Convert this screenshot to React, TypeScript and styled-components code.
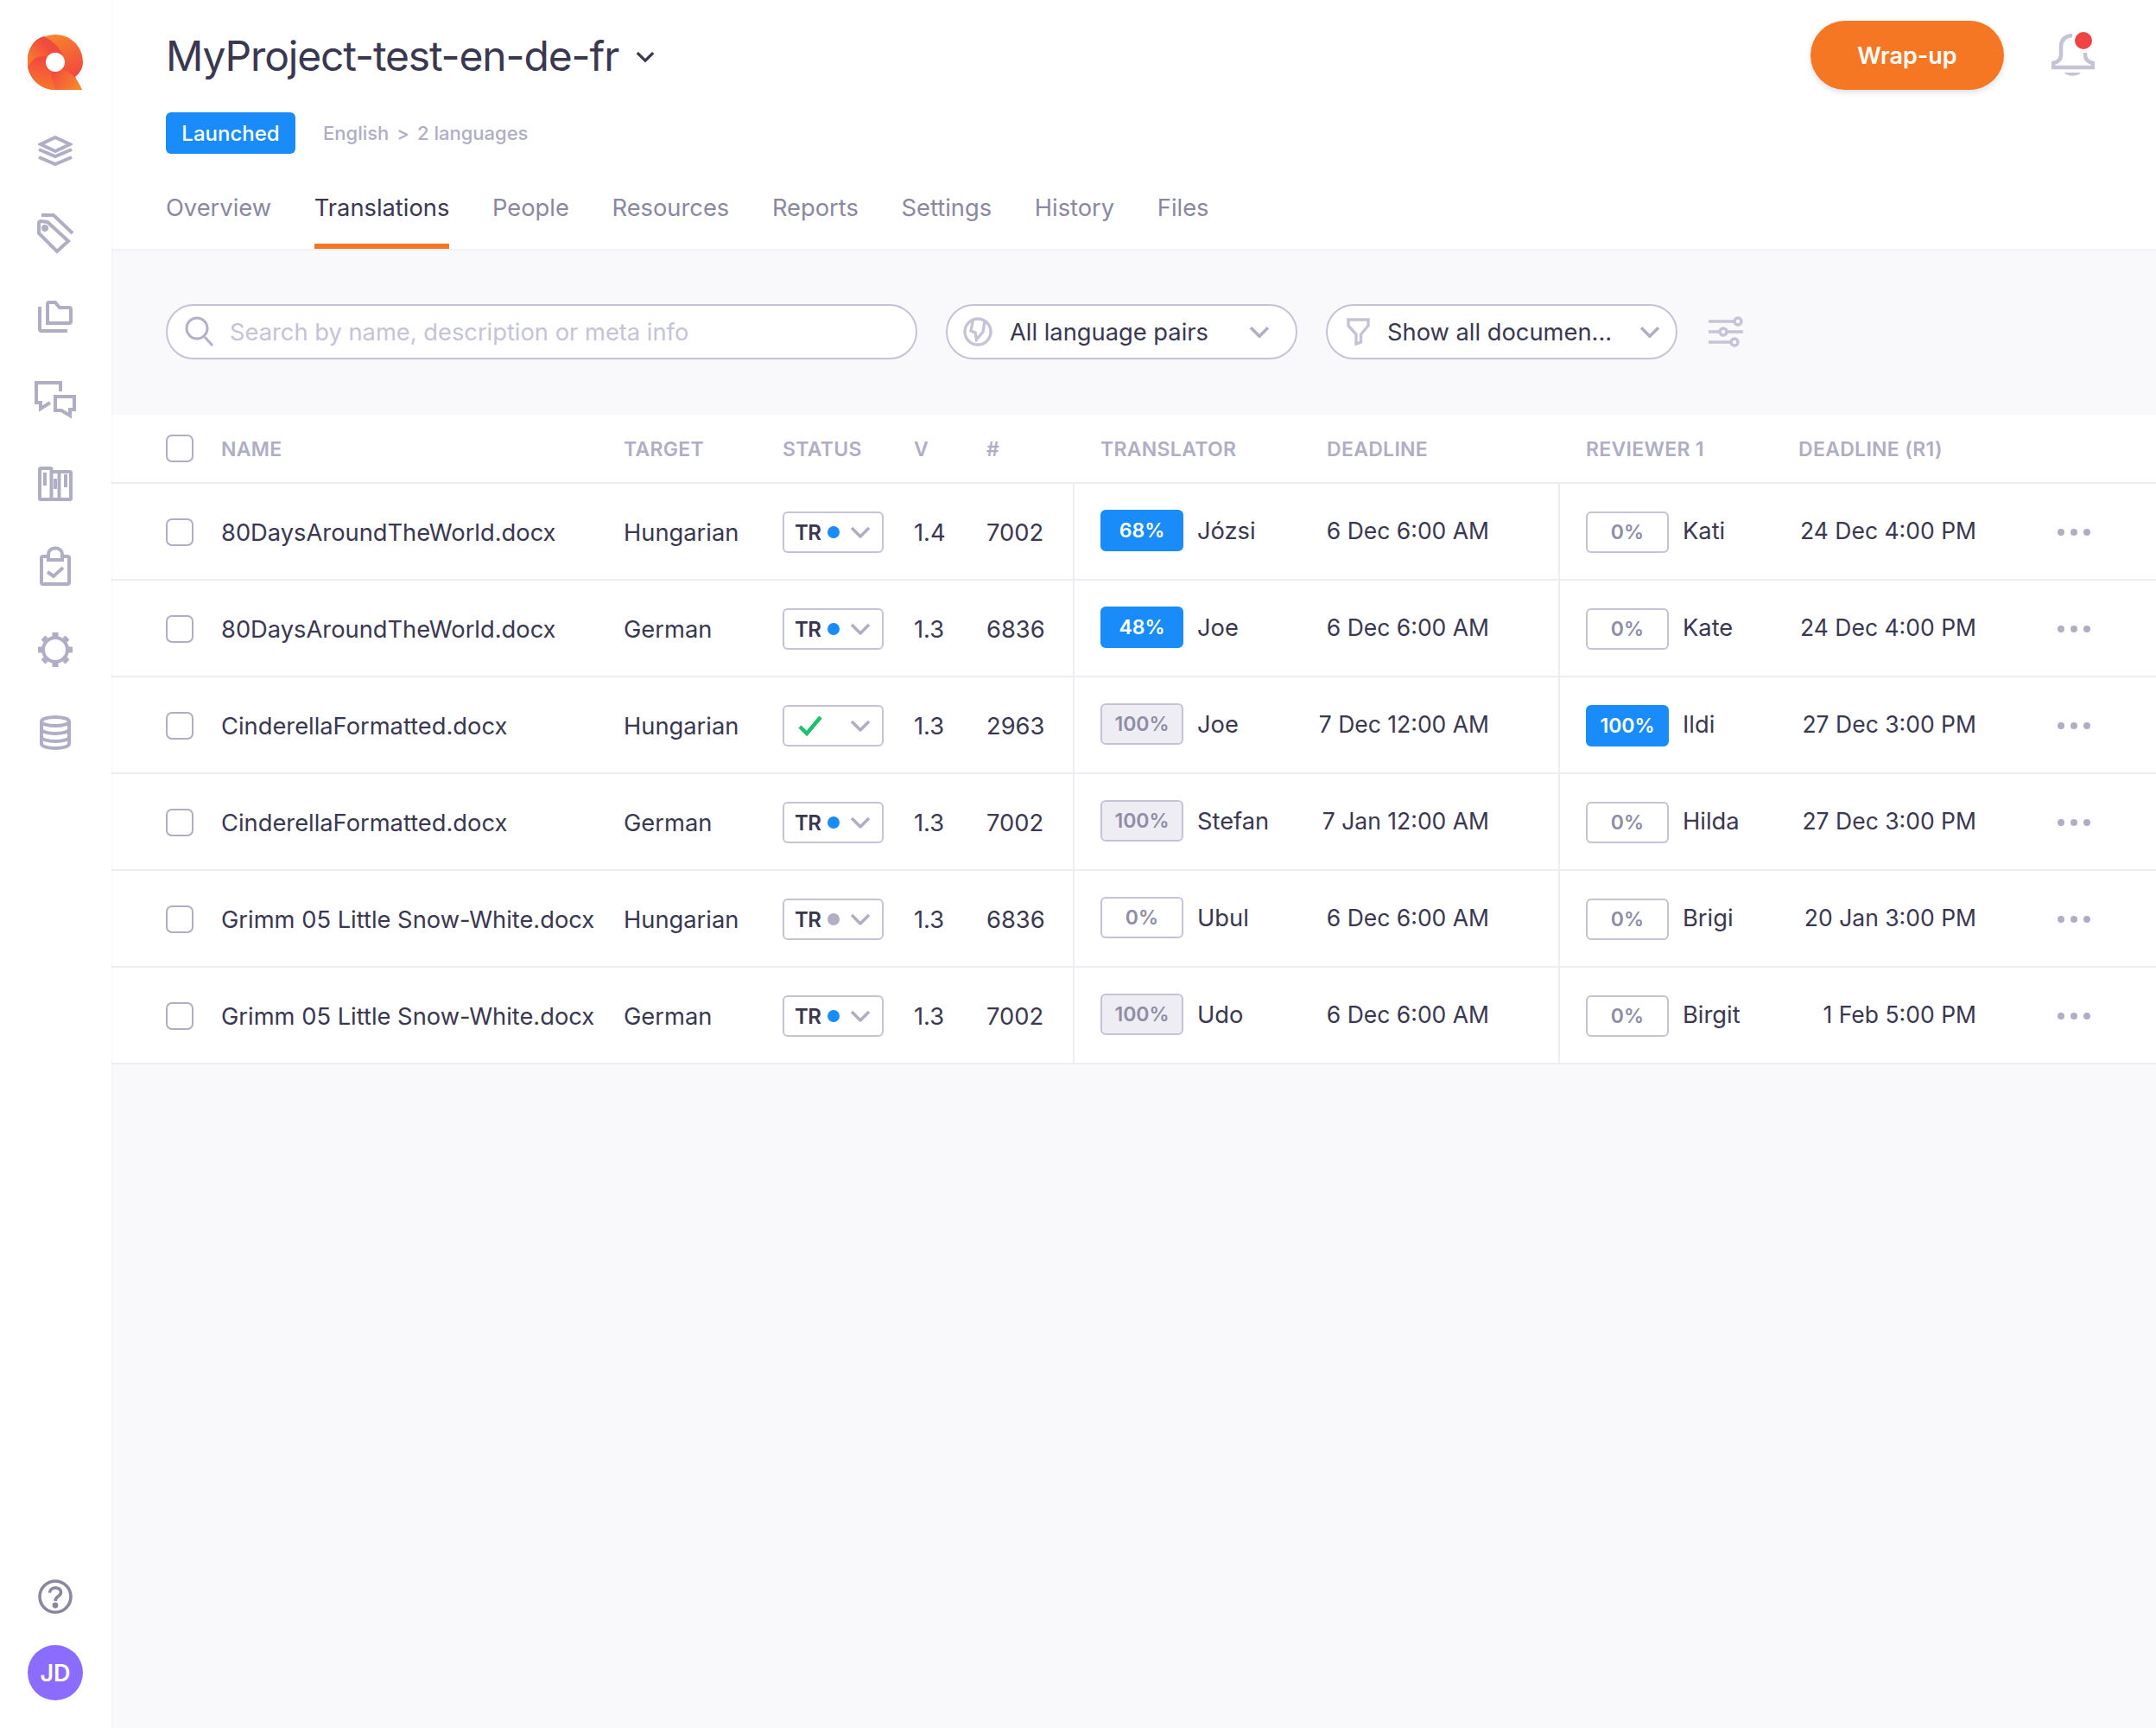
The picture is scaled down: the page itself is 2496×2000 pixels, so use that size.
import React from 'react'
import styled, { createGlobalStyle } from 'styled-components'

const GlobalStyle = createGlobalStyle`
  html, body {
    margin: 0;
    padding: 0;
    background: #f9f9fc;
    font-family: Inter, "Liberation Sans", sans-serif;
    color: #3a3750;
  }
  * { box-sizing: border-box; }
`

const Page = styled.div`
  display: flex;
  width: 2496px;
  min-height: 2000px;
`

/* Sidebar */
const Sidebar = styled.aside`
  width: 129px;
  flex: none;
  display: flex;
  flex-direction: column;
  align-items: center;
  background: #fff;
  box-shadow: 1px 0 3px rgba(60, 55, 100, 0.04);
  padding: 40px 1px 32px 0;
  z-index: 1;
`

const Nav = styled.nav`
  display: flex;
  flex-direction: column;
  align-items: center;
  margin-top: 23px;
  flex: 1;
`

const NavItem = styled.div`
  width: 64px;
  height: 96.15px;
  display: flex;
  align-items: center;
  justify-content: center;
`

const AvatarCircle = styled.div`
  width: 64px;
  height: 64px;
  margin-top: 36px;
  border-radius: 50%;
  background: #8a6dff;
  color: #fff;
  font-size: 27px;
  font-weight: 600;
  display: flex;
  align-items: center;
  justify-content: center;
`

/* Header */
const Main = styled.main`
  flex: 1;
  min-width: 0;
`

const Header = styled.header`
  height: 290px;
  background: #fff;
  border-bottom: 2px solid #f0f0f5;
  padding: 0 0 0 63px;
  display: flex;
  flex-direction: column;
`

const TitleRow = styled.div`
  height: 130px;
  display: flex;
  align-items: center;
  padding-bottom: 2px;
`

const Title = styled.h1`
  margin: 0;
  font-size: 48px;
  font-weight: 400;
  letter-spacing: -1.15px;
  color: #3a3750;
`

const TitleCaret = styled.span`
  display: flex;
  margin-left: 20px;
  margin-top: 4px;
`

const HeaderActions = styled.div`
  margin-left: auto;
  margin-right: 71px;
  display: flex;
  align-items: center;
  gap: 55px;
`

const WrapButton = styled.button`
  width: 224px;
  height: 80px;
  border: 0;
  border-radius: 40px;
  background: #f57723;
  color: #fff;
  font-family: inherit;
  font-size: 27px;
  font-weight: 600;
  box-shadow: 0 3px 6px rgba(60, 55, 100, 0.16);
`

const Bell = styled.div`
  position: relative;
  width: 50px;
  height: 50px;
`

const BellDot = styled.span`
  position: absolute;
  right: 3px;
  top: -2px;
  width: 20px;
  height: 20px;
  border-radius: 50%;
  background: #f04343;
`

const MetaRow = styled.div`
  display: flex;
  align-items: center;
  height: 48px;
  gap: 32px;
`

const StateChip = styled.span`
  width: 150px;
  height: 48px;
  border-radius: 6px;
  background: #1a8cf9;
  color: #fff;
  font-size: 24px;
  font-weight: 500;
  display: flex;
  align-items: center;
  justify-content: center;
`

const LangInfo = styled.span`
  display: flex;
  align-items: center;
  gap: 9px;
  font-size: 22px;
  font-weight: 500;
  color: #b0aec4;
`

const Tabs = styled.div`
  display: flex;
  gap: 49.7px;
  margin-top: auto;
  height: 84px;
`

const Tab = styled.div<{ $active?: boolean }>`
  height: 84px;
  display: flex;
  align-items: center;
  padding-bottom: 6px;
  font-size: 27.3px;
  color: ${(p) => (p.$active ? '#3a3750' : '#8a88a0')};
  border-bottom: 6px solid ${(p) => (p.$active ? '#f57723' : 'transparent')};
`

/* Toolbar */
const Toolbar = styled.div`
  height: 190px;
  padding: 62px 0 0 63px;
  display: flex;
  align-items: flex-start;
  gap: 33px;
`

const Pill = styled.div<{ $width: number; $left: number; $right: number }>`
  width: ${(p) => p.$width}px;
  height: 64px;
  border: 2px solid #c5c3d6;
  border-radius: 32px;
  background: #fff;
  display: flex;
  align-items: center;
  flex: none;
  padding: 0 ${(p) => p.$right}px 0 ${(p) => p.$left}px;
  font-size: 27.3px;
  color: #3a3750;
`

const Placeholder = styled.span`
  color: #c5c3d6;
  margin-left: 18px;
`

const PillLabel = styled.span`
  margin-left: 20px;
  flex: 1;
  white-space: nowrap;
`

const SlidersBox = styled.div`
  display: flex;
  height: 64px;
  align-items: center;
  margin-left: 3px;
`

/* Table */
const Table = styled.div`
  background: #fff;
`

const GRID = '64px 466px 184px 152px 84px 100px 294px 268px 278px 300px 114px'

const HeadRow = styled.div`
  display: grid;
  grid-template-columns: ${GRID};
  height: 80px;
  padding-left: 63px;
  align-items: center;
  border-bottom: 2px solid #eeedf3;
  font-size: 23px;
  font-weight: 600;
  color: #b0aec4;
`

const HeadCell = styled.div<{ $pad?: number }>`
  padding-left: ${(p) => p.$pad || 0}px;
  padding-top: 2px;
  white-space: nowrap;
  letter-spacing: 0.3px;
`

const Row = styled.div`
  display: grid;
  grid-template-columns: ${GRID};
  height: 112px;
  padding-left: 63px;
  border-bottom: 2px solid #eeedf3;
  font-size: 27.3px;
  color: #3a3750;
`

const Cell = styled.div`
  display: flex;
  align-items: center;
  white-space: nowrap;
  min-width: 0;
  padding-top: 2px;
`

const PersonCell = styled(Cell)`
  border-left: 2px solid #eeedf3;
  padding: 0 0 2px 30px;
  gap: 16px;
`

const DateCell = styled(Cell)<{ $pad: number }>`
  justify-content: flex-end;
  padding: 0 ${(p) => p.$pad}px 2px 0;
  font-size: 26.5px;
`

const Checkbox = styled.span`
  display: block;
  width: 32px;
  height: 32px;
  border: 2px solid #b0aec4;
  border-radius: 7px;
  background: #fff;
`

const StatusBox = styled.div`
  width: 117px;
  height: 48px;
  border: 2px solid #c5c3d6;
  border-radius: 6px;
  display: flex;
  align-items: center;
  padding: 0 13px;
  position: relative;
`

const StatusText = styled.span`
  font-size: 24px;
  font-weight: 600;
  letter-spacing: -0.5px;
  width: 37px;
  margin-left: -1px;
`

const Dot = styled.span<{ $grey?: boolean }>`
  width: 14px;
  height: 14px;
  border-radius: 50%;
  background: ${(p) => (p.$grey ? '#b0aec4' : '#1a8cf9')};
  margin-left: 1px;
`

const StatusCaret = styled.span`
  position: absolute;
  right: 13px;
  top: 50%;
  transform: translateY(-50%);
  display: flex;
`

const CheckWrap = styled.span`
  display: flex;
  margin-left: 3px;
`

const Progress = styled.span<{ $kind: 'blue' | 'done' | 'none'; $low?: boolean }>`
  width: 96px;
  height: 48px;
  flex: none;
  margin-top: ${(p) => (p.$low ? 4 : 0)}px;
  border-radius: 6px;
  display: flex;
  align-items: center;
  justify-content: center;
  font-size: 23px;
  font-weight: 600;
  border: 2px solid ${(p) => (p.$kind === 'blue' ? '#1a8cf9' : '#c5c3d6')};
  background: ${(p) =>
    p.$kind === 'blue' ? '#1a8cf9' : p.$kind === 'done' ? '#eeedf4' : '#fff'};
  color: ${(p) => (p.$kind === 'blue' ? '#fff' : '#8f8da6')};
`

const Dots = styled.div`
  display: flex;
  gap: 7px;
`

const MoreDot = styled.span`
  width: 8px;
  height: 8px;
  border-radius: 50%;
  background: #b0aec4;
`

/* Icons */
const ICON = '#b0aec4'

const Logo = () => (
  <svg width="64" height="64" viewBox="0 0 64 64">
    <defs>
      <linearGradient id="lgBase" x1="0.3" y1="0" x2="0.7" y2="0.8">
        <stop offset="0" stopColor="#f98a2a" />
        <stop offset="1" stopColor="#f14a3e" />
      </linearGradient>
      <linearGradient id="lgTop" x1="0" y1="0.8" x2="0.8" y2="0.1">
        <stop offset="0" stopColor="#f98029" />
        <stop offset="0.7" stopColor="#f14a3e" />
      </linearGradient>
      <linearGradient id="lgLow" x1="0.4" y1="0" x2="0.2" y2="1">
        <stop offset="0" stopColor="#f1463f" />
        <stop offset="1" stopColor="#f87a2c" />
      </linearGradient>
      <linearGradient id="lgTail" x1="0" y1="0.4" x2="1" y2="0.8">
        <stop offset="0" stopColor="#f2503c" />
        <stop offset="1" stopColor="#f98a2a" />
      </linearGradient>
    </defs>
    <path
      d="M32 0C50 0 64 14 64 32C64 39 60 45 55 49C58 55 60 59 63 64H32C14 64 0 50 0 32C0 14 14 0 32 0Z"
      fill="url(#lgBase)"
    />
    <path d="M0 38C-3 18 8 4 19 2C30 8 40 16 42 30L24 32C14 26 6 30 0 38Z" fill="url(#lgTop)" />
    <path d="M0 38C5 28 14 22 26 27L32 42L40 64H32C16 64 3 52 0 38Z" fill="url(#lgLow)" />
    <path d="M28 42C42 38 55 44 63 64H32C31 55 26 49 28 42Z" fill="url(#lgTail)" />
    <circle cx="32" cy="32" r="11" fill="#fff" />
  </svg>
)

const stroke = {
  fill: 'none',
  stroke: ICON,
  strokeWidth: 4,
}

const navIcons = [
  <svg key="layers" width="40" height="36" viewBox="0 0 40 36" {...stroke}>
    <path d="M20 2L37 10L20 18L3 10Z" />
    <path d="M1 16L20 24L39 16" />
    <path d="M1 25L20 33L39 25" />
  </svg>,
  <svg key="tag" width="44" height="48" viewBox="0 0 44 48" {...stroke}>
    <path d="M3 11C3 10 4 9 5 9L13 10L37 32L24 44L3 23Z" />
    <path d="M6 2H20L42 23" />
    <circle cx="10" cy="17" r="4" fill={ICON} stroke="none" />
  </svg>,
  <svg key="folder" width="40" height="38" viewBox="0 0 40 38" {...stroke}>
    <path d="M11 26V4Q11 2 13 2H20L25 8H36Q38 8 38 10V24Q38 26 36 26Z" />
    <path d="M2 7V33Q2 35 4 35H34" />
  </svg>,
  <svg key="chat" width="48" height="44" viewBox="0 0 48 44" {...stroke}>
    <path d="M30 12V2H2V25H7V32L18 25" />
    <path d="M24 18H46V33H41V40L31 34H24Z" />
  </svg>,
  <svg key="kanban" width="40" height="40" viewBox="0 0 40 40" {...stroke}>
    <rect x="2" y="2" width="13.5" height="36" rx="1" />
    <path d="M15.5 6H36.5Q38 6 38 7V37Q38 38 37 38H15.5" />
    <path d="M24.5 6V38" />
    <rect x="6" y="7" width="4" height="15" fill={ICON} stroke="none" />
    <rect x="18" y="14" width="4" height="12" fill={ICON} stroke="none" />
    <rect x="30" y="9" width="4" height="15" fill={ICON} stroke="none" />
  </svg>,
  <svg key="clipboard" width="36" height="48" viewBox="0 0 36 48" {...stroke}>
    <path d="M9 12H4Q2 12 2 14V42Q2 44 4 44H32Q34 44 34 42V14Q34 12 32 12H27" />
    <path d="M10 16H26V10C26 0 10 0 10 10Z" />
    <path d="M9 30L16 35L27 25" />
  </svg>,
  <svg key="gear" width="40" height="40" viewBox="0 0 40 40" {...stroke}>
    <circle cx="20" cy="20" r="14" strokeWidth="4" />
    <path d="M20 0V6M20 34V40M0 20H6M34 20H40M6 6L9 9M31 31L34 34M6 34L9 31M31 9L34 6" strokeWidth="7" />
  </svg>,
  <svg key="db" width="36" height="40" viewBox="0 0 36 40" {...stroke}>
    <ellipse cx="18" cy="7" rx="16" ry="5" />
    <path d="M2 7V33C2 36 10 38 18 38C26 38 34 36 34 33V7" />
    <path d="M2 16C2 19 10 21 18 21C26 21 34 19 34 16" />
    <path d="M2 25C2 28 10 30 18 30C26 30 34 28 34 25" />
  </svg>,
]

const HelpIcon = () => (
  <svg width="40" height="40" viewBox="0 0 40 40" fill="none" stroke="#8a88a0" strokeWidth="3.6">
    <circle cx="20" cy="20" r="18" />
    <path d="M13.5 15.5C14 8 26.5 8 26.5 15C26.5 20 20 19 20 25" />
    <circle cx="20" cy="30" r="1.6" fill="#8a88a0" />
  </svg>
)

const Chevron = ({ size = 24, color = '#b0aec4', width = 3.5 }: { size?: number; color?: string; width?: number }) => (
  <svg width={size} height={size * 0.6} viewBox="0 0 24 14" fill="none" stroke={color} strokeWidth={width}>
    <path d="M2 2L12 12L22 2" />
  </svg>
)

const BellIcon = () => (
  <svg width="50" height="50" viewBox="0 0 50 50" fill="none" stroke="#c5c3d6" strokeWidth="4.5">
    <path d="M24 2C14 3 11 9 11 15V24C11 30 8 33 2 34V39H48V34C42 33 39 30 39 24V22" />
    <path d="M15 45C18 50 30 50 34 45Z" fill="#c5c3d6" stroke="none" />
  </svg>
)

const SearchIcon = () => (
  <svg width="34" height="36" viewBox="0 0 34 36" fill="none" stroke="#b3b1c7" strokeWidth="3">
    <circle cx="14" cy="14" r="12" />
    <path d="M23 24L32 34" />
  </svg>
)

const GlobeIcon = () => (
  <svg width="34" height="34" viewBox="0 0 34 34" fill="none" stroke="#c5c3d6" strokeWidth="3.4">
    <circle cx="17" cy="17" r="15" />
    <path d="M11.5 3L9 16L14 18L15.5 26L23 17L25 5" />
  </svg>
)

const FunnelIcon = () => (
  <svg width="27" height="32" viewBox="0 0 27 32" fill="none" stroke="#c5c3d6" strokeWidth="3.4">
    <path d="M2 2H25V9L16.5 19V28L11 30V19L2 9Z" />
  </svg>
)

const SlidersIcon = () => (
  <svg width="40" height="36" viewBox="0 0 40 36" fill="none" stroke="#c5c3d6" strokeWidth="3.5">
    <path d="M0 6H30M0 18H12M22 18H40M0 30H26" />
    <circle cx="34" cy="6" r="4" />
    <circle cx="17" cy="18" r="4" />
    <circle cx="30" cy="30" r="4" />
  </svg>
)

const CheckIcon = () => (
  <svg width="28" height="24" viewBox="0 0 28 24" fill="none" stroke="#1cc06f" strokeWidth="4.5">
    <path d="M2 13L10 21L26 2" />
  </svg>
)

/* Data */
type Kind = 'blue' | 'done' | 'none'

interface Job {
  name: string
  target: string
  status: 'blue' | 'grey' | 'check'
  version: string
  count: string
  tPct: string
  tKind: Kind
  translator: string
  deadline: string
  rPct: string
  rKind: Kind
  reviewer: string
  deadlineR: string
}

const jobs: Job[] = [
  { name: '80DaysAroundTheWorld.docx', target: 'Hungarian', status: 'blue', version: '1.4', count: '7002', tPct: '68%', tKind: 'blue', translator: 'Józsi', deadline: '6 Dec 6:00 AM', rPct: '0%', rKind: 'none', reviewer: 'Kati', deadlineR: '24 Dec 4:00 PM' },
  { name: '80DaysAroundTheWorld.docx', target: 'German', status: 'blue', version: '1.3', count: '6836', tPct: '48%', tKind: 'blue', translator: 'Joe', deadline: '6 Dec 6:00 AM', rPct: '0%', rKind: 'none', reviewer: 'Kate', deadlineR: '24 Dec 4:00 PM' },
  { name: 'CinderellaFormatted.docx', target: 'Hungarian', status: 'check', version: '1.3', count: '2963', tPct: '100%', tKind: 'done', translator: 'Joe', deadline: '7 Dec 12:00 AM', rPct: '100%', rKind: 'blue', reviewer: 'Ildi', deadlineR: '27 Dec 3:00 PM' },
  { name: 'CinderellaFormatted.docx', target: 'German', status: 'blue', version: '1.3', count: '7002', tPct: '100%', tKind: 'done', translator: 'Stefan', deadline: '7 Jan 12:00 AM', rPct: '0%', rKind: 'none', reviewer: 'Hilda', deadlineR: '27 Dec 3:00 PM' },
  { name: 'Grimm 05 Little Snow-White.docx', target: 'Hungarian', status: 'grey', version: '1.3', count: '6836', tPct: '0%', tKind: 'none', translator: 'Ubul', deadline: '6 Dec 6:00 AM', rPct: '0%', rKind: 'none', reviewer: 'Brigi', deadlineR: '20 Jan 3:00 PM' },
  { name: 'Grimm 05 Little Snow-White.docx', target: 'German', status: 'blue', version: '1.3', count: '7002', tPct: '100%', tKind: 'done', translator: 'Udo', deadline: '6 Dec 6:00 AM', rPct: '0%', rKind: 'none', reviewer: 'Birgit', deadlineR: '1 Feb 5:00 PM' },
]

const tabs = ['Overview', 'Translations', 'People', 'Resources', 'Reports', 'Settings', 'History', 'Files']

const App: React.FC = () => (
  <Page>
    <GlobalStyle />
    <Sidebar>
      <Logo />
      <Nav>
        {navIcons.map((icon) => (
          <NavItem key={icon.key}>{icon}</NavItem>
        ))}
      </Nav>
      <HelpIcon />
      <AvatarCircle>JD</AvatarCircle>
    </Sidebar>

    <Main>
      <Header>
        <TitleRow>
          <Title>MyProject-test-en-de-fr</Title>
          <TitleCaret>
            <Chevron size={22} color="#3a3750" width={3.5} />
          </TitleCaret>
          <HeaderActions>
            <WrapButton>Wrap-up</WrapButton>
            <Bell>
              <BellIcon />
              <BellDot />
            </Bell>
          </HeaderActions>
        </TitleRow>
        <MetaRow>
          <StateChip>Launched</StateChip>
          <LangInfo>
            <span>English</span>
            <span>&gt;</span>
            <span>2 languages</span>
          </LangInfo>
        </MetaRow>
        <Tabs>
          {tabs.map((tab) => (
            <Tab key={tab} $active={tab === 'Translations'}>
              {tab}
            </Tab>
          ))}
        </Tabs>
      </Header>

      <Toolbar>
        <Pill $width={870} $left={20} $right={20}>
          <SearchIcon />
          <Placeholder>Search by name, description or meta info</Placeholder>
        </Pill>
        <Pill $width={407} $left={18} $right={30}>
          <GlobeIcon />
          <PillLabel>All language pairs</PillLabel>
          <Chevron />
        </Pill>
        <Pill $width={407} $left={22} $right={18}>
          <FunnelIcon />
          <PillLabel>Show all documen...</PillLabel>
          <Chevron />
        </Pill>
        <SlidersBox>
          <SlidersIcon />
        </SlidersBox>
      </Toolbar>

      <Table>
        <HeadRow>
          <Checkbox />
          <HeadCell>NAME</HeadCell>
          <HeadCell>TARGET</HeadCell>
          <HeadCell>STATUS</HeadCell>
          <HeadCell>V</HeadCell>
          <HeadCell>#</HeadCell>
          <HeadCell $pad={32}>TRANSLATOR</HeadCell>
          <HeadCell>DEADLINE</HeadCell>
          <HeadCell $pad={32}>REVIEWER 1</HeadCell>
          <HeadCell>DEADLINE (R1)</HeadCell>
          <div />
        </HeadRow>
        {jobs.map((job) => (
          <Row key={job.name + job.target}>
            <Cell>
              <Checkbox />
            </Cell>
            <Cell>{job.name}</Cell>
            <Cell>{job.target}</Cell>
            <Cell>
              <StatusBox>
                {job.status === 'check' ? (
                  <CheckWrap>
                    <CheckIcon />
                  </CheckWrap>
                ) : (
                  <>
                    <StatusText>TR</StatusText>
                    <Dot $grey={job.status === 'grey'} />
                  </>
                )}
                <StatusCaret>
                  <Chevron />
                </StatusCaret>
              </StatusBox>
            </Cell>
            <Cell>{job.version}</Cell>
            <Cell>{job.count}</Cell>
            <PersonCell>
              <Progress $kind={job.tKind}>{job.tPct}</Progress>
              {job.translator}
            </PersonCell>
            <DateCell $pad={80}>{job.deadline}</DateCell>
            <PersonCell>
              <Progress $kind={job.rKind} $low>
                {job.rPct}
              </Progress>
              {job.reviewer}
            </PersonCell>
            <DateCell $pad={94}>{job.deadlineR}</DateCell>
            <Cell>
              <Dots>
                <MoreDot />
                <MoreDot />
                <MoreDot />
              </Dots>
            </Cell>
          </Row>
        ))}
      </Table>
    </Main>
  </Page>
)

export default App
